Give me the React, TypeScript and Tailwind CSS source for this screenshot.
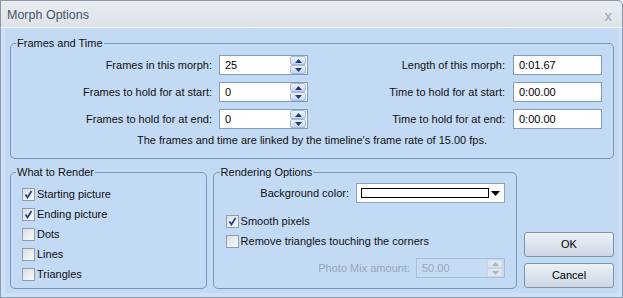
import React from "react";

function Arrow({ up, color, w = 7, h = 4 }: { up?: boolean; color: string; w?: number; h?: number }) {
  return (
    <svg width={w} height={h} viewBox={`0 0 ${w} ${h}`}>
      <path d={up ? `M0 ${h}L${w / 2} 0L${w} ${h}Z` : `M0 0L${w / 2} ${h}L${w} 0Z`} fill={color} />
    </svg>
  );
}

function Spinner({ disabled }: { disabled?: boolean }) {
  const btn = disabled
    ? "border-[#c9d5e4] bg-[#dde6f1]"
    : "border-[#a7bad5] bg-gradient-to-b from-[#eef3fb] to-[#c8d8ef]";
  const c = disabled ? "#aab6c5" : "#1d3a80";
  return (
    <div className="flex flex-col h-[18px] w-[16px]">
      <div className={`flex-1 flex items-center justify-center border rounded-[2px] ${btn}`}>
        <Arrow up color={c} />
      </div>
      <div className={`flex-1 flex items-center justify-center border rounded-[2px] ${btn}`}>
        <Arrow color={c} />
      </div>
    </div>
  );
}

function NumInput({ value, spin, disabled }: { value: string; spin?: boolean; disabled?: boolean }) {
  return (
    <div
      className={`w-[89px] h-[20px] border flex items-center justify-between pl-[5px] pr-[1px] ${
        disabled ? "border-[#a9bdd6] bg-[#c6dcf5] text-[#9aa7b8]" : "border-[#7f9db9] bg-white text-black"
      }`}
    >
      <span className="leading-[13px]">{value}</span>
      {spin ? <Spinner disabled={disabled} /> : null}
    </div>
  );
}

function Check({ checked, label }: { checked?: boolean; label: string }) {
  return (
    <div className="flex items-center h-[20px]">
      <div className="w-[13px] h-[13px] border border-[#8f9db2] bg-gradient-to-br from-[#d9dde3] to-[#fbfbfb] flex items-center justify-center">
        {checked ? (
          <svg width="9" height="9" viewBox="0 0 9 9">
            <path d="M1.5 4.5L3.5 7.5L7.5 1" stroke="#22408f" strokeWidth="1.7" fill="none" />
          </svg>
        ) : null}
      </div>
      <span className="ml-[2px] leading-[13px]">{label}</span>
    </div>
  );
}

function Button({ label }: { label: string }) {
  return (
    <div className="h-[25px] w-[90px] rounded-[3px] border border-[#8193a9] bg-gradient-to-b from-[#eef2f7] via-[#dce4ee] to-[#cdd7e3] flex items-center justify-center text-black">
      {label}
    </div>
  );
}

export default function App() {
  return (
    <div className="w-[623px] h-[298px] flex flex-col font-['Liberation_Sans',Arial,sans-serif] text-[11px] text-[#111] overflow-hidden">
      {/* title bar */}
      <div className="h-[28px] shrink-0 flex items-center justify-between border-t border-x border-[#8b97a8] rounded-tr-[5px] bg-gradient-to-b from-[#e9edf2] to-[#dde3ea] border-b border-b-[#f2f5f9] pl-[6px] pr-[10px] pt-[3px]">
        <span className="text-[12.5px] text-[#4a5566]">Morph Options</span>
        <span className="text-[15px] text-[#9ea7b2] leading-none">x</span>
      </div>
      {/* body */}
      <div className="flex-1 flex flex-col border-x border-b border-[#8d9db3] bg-[#c3daf5]">
        <div className="flex-1 flex flex-col border-x-[4px] border-b-[4px] border-[#d1e1f5] pl-[5px] pr-[4px] pt-[9px]">
          <fieldset className="w-[604px] border border-[#7a95bc] rounded-[5px] pb-[11px]">
            <legend className="ml-[5px] px-[1px] leading-[13px]">Frames and Time</legend>
            <div className="mt-[5px] flex flex-col gap-[7px]">
              {[
                ["Frames in this morph:", "25", "Length of this morph:", "0:01.67"],
                ["Frames to hold for at start:", "0", "Time to hold for at start:", "0:00.00"],
                ["Frames to hold for at end:", "0", "Time to hold for at end:", "0:00.00"],
              ].map(([l1, v1, l2, v2]) => (
                <div key={l1} className="flex items-center h-[20px]">
                  <div className="w-[201px] text-right leading-[13px]">{l1}</div>
                  <div className="ml-[7px]">
                    <NumInput value={v1} spin />
                  </div>
                  <div className="w-[197px] text-right leading-[13px]">{l2}</div>
                  <div className="ml-[8px]">
                    <NumInput value={v2} />
                  </div>
                </div>
              ))}
            </div>
            <div className="mt-[5px] text-center leading-[13px]">
              The frames and time are linked by the timeline's frame rate of 15.00 fps.
            </div>
          </fieldset>

          <div className="mt-[7px] h-[123px] flex">
            <fieldset className="w-[197px] border border-[#7a95bc] rounded-[5px] pl-[11px]">
              <legend className="ml-[-6px] px-[1px] leading-[13px]">What to Render</legend>
              <div className="mt-[5px] flex flex-col">
                <Check checked label="Starting picture" />
                <Check checked label="Ending picture" />
                <Check label="Dots" />
                <Check label="Lines" />
                <Check label="Triangles" />
              </div>
            </fieldset>
            <fieldset className="ml-[6px] w-[305px] border border-[#7a95bc] rounded-[5px] pl-[12px] pr-[11px]">
              <legend className="ml-[-6px] px-[1px] leading-[13px]">Rendering Options</legend>
              <div className="mt-[4px] flex items-center justify-end h-[20px]">
                <span className="leading-[13px]">Background color:</span>
                <div className="ml-[7px] w-[149px] h-[20px] border border-[#8da4c0] bg-white flex items-center justify-between pl-[4px] pr-[4px]">
                  <div className="w-[128px] h-[10px] border border-black bg-white" />
                  <Arrow color="#000000" w={9} h={5} />
                </div>
              </div>
              <div className="mt-[8px] flex flex-col">
                <Check checked label="Smooth pixels" />
                <Check label="Remove triangles touching the corners" />
              </div>
              <div className="mt-[7px] flex items-center justify-end h-[20px]">
                <span className="leading-[13px] text-[#98a5b6]">Photo Mix amount:</span>
                <div className="ml-[6px]">
                  <NumInput value="50.00" spin disabled />
                </div>
              </div>
            </fieldset>
            <div className="ml-[7px] flex flex-col justify-end gap-[6px] pb-[1px]">
              <Button label="OK" />
              <Button label="Cancel" />
            </div>
          </div>
        </div>
      </div>
    </div>
  );
}
